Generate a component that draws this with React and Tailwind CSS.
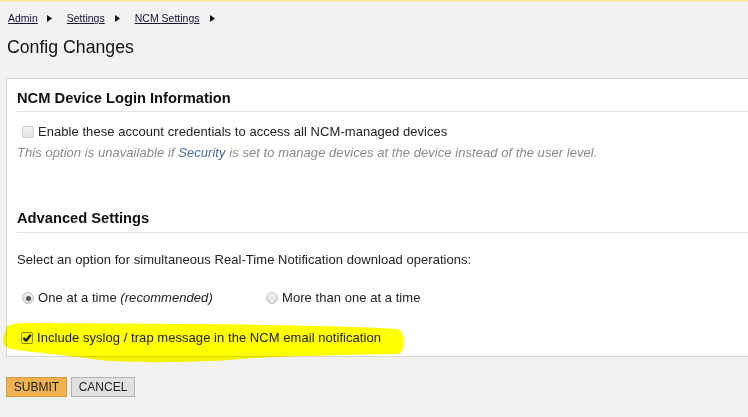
import React from 'react';

const Arrow = () => (
  <svg width="5" height="7" viewBox="0 0 5 7" className="inline-block">
    <path d="M0 0 L5 3.5 L0 7 Z" fill="#111" />
  </svg>
);

const DisabledBox = () => (
  <span className="inline-block w-[12px] h-[12px] rounded-[2px] border border-[#cfcfcf] bg-gradient-to-b from-[#f4f4f4] to-[#e2e2e2]" />
);

const CheckedBox = () => (
  <span className="relative inline-block w-[12px] h-[12px] rounded-[2px] border border-[#8c8c50] bg-[#f6f6b0]">
    <svg width="12" height="12" viewBox="0 0 12 12" className="absolute -left-[1px] -top-[1px]">
      <path d="M2.5 6 L5 8.8 L9.8 2.8" stroke="#111" strokeWidth="2.2" fill="none" strokeLinejoin="round" />
    </svg>
  </span>
);

const Radio = ({ checked }) => (
  <span className="relative inline-flex items-center justify-center w-[12px] h-[12px] rounded-full border border-[#c2c2c2] bg-gradient-to-b from-[#f2f2f2] to-[#dcdcdc]">
    {checked && <span className="w-[5px] h-[5px] rounded-full bg-[#555]" />}
  </span>
);

export default function App() {
  return (
    <div className="relative min-h-screen bg-[#f2f2f2] border-t-2 border-[#f6e8aa] font-['Liberation_Sans',Arial,sans-serif] text-[#222] overflow-hidden">
      {/* breadcrumb */}
      <div className="pt-[9px] pl-[8px] flex items-center text-[10.5px] leading-[14px] text-[#141438]">
        <span className="underline">Admin</span>
        <span className="ml-[9px] mr-[15px] flex"><Arrow /></span>
        <span className="underline">Settings</span>
        <span className="ml-[10px] mr-[15px] flex"><Arrow /></span>
        <span className="underline">NCM Settings</span>
        <span className="ml-[10px] flex"><Arrow /></span>
      </div>

      <h1 className="mt-[11px] pl-[7px] text-[17.7px] leading-[22px] text-[#111]">Config Changes</h1>

      {/* panel */}
      <div className="mt-[20px] ml-[6px] bg-white border-l border-t border-b border-[#d6d6d6] pl-[10px] pb-[10px] text-[13px] tracking-[0.05px]">
        <div className="pt-[10px] pb-[4px] leading-[18px] border-b border-[#e2e2e2] text-[14.7px] tracking-normal font-bold text-[#111]">
          NCM Device Login Information
        </div>
        <div className="mt-[12px] flex items-center leading-[16px] pl-[5px] text-[#222]">
          <DisabledBox />
          <span className="ml-[4px]">Enable these account credentials to access all NCM-managed devices</span>
        </div>
        <div className="mt-[5px] leading-[16px] italic text-[#8a8a8a]">
          This option is unavailable if <span className="text-[#4a6a9a]">Security</span> is set to manage devices at the device instead of the user level.
        </div>

        <div className="mt-[38px] pt-[10px] pb-[5px] leading-[18px] border-b border-[#e2e2e2] text-[14.7px] tracking-normal font-bold text-[#111]">
          Advanced Settings
        </div>
        <div className="mt-[19px] leading-[16px]">
          Select an option for simultaneous Real-Time Notification download operations:
        </div>
        <div className="mt-[22px] flex items-center leading-[16px] pl-[5px]">
          <div className="flex items-center w-[244px]">
            <Radio checked />
            <span className="ml-[4px]">One at a time <i>(recommended)</i></span>
          </div>
          <div className="flex items-center">
            <Radio />
            <span className="ml-[4px]">More than one at a time</span>
          </div>
        </div>
        <div className="mt-[24px] flex items-center leading-[16px] pl-[4px]">
          <CheckedBox />
          <span className="ml-[4px]">Include syslog / trap message in the NCM email notification</span>
        </div>
      </div>

      {/* buttons */}
      <div className="mt-[20px] ml-[6px] flex gap-[4px] text-[12px]">
        <button className="w-[61px] h-[20px] bg-[#efb24f] border border-[#d49a3c] text-[#222] leading-none">SUBMIT</button>
        <button className="w-[64px] h-[20px] bg-[#e1e1e1] border border-[#b2b2b2] text-[#222] leading-none">CANCEL</button>
      </div>

      {/* highlighter annotation */}
      <svg className="absolute left-0 top-0 pointer-events-none mix-blend-multiply" width="748" height="417" viewBox="0 0 748 417">
        <path
          d="M6 329 C4 323 12 321 30 321 L200 322 C300 323 370 325 397 327 C406 329 406 350 398 352 C330 353 260 355 240 357 C200 361 120 361 100 358 C60 352 20 350 8 346 C2 344 2 335 6 329 Z"
          fill="#ffff00"
        />
      </svg>
    </div>
  );
}
